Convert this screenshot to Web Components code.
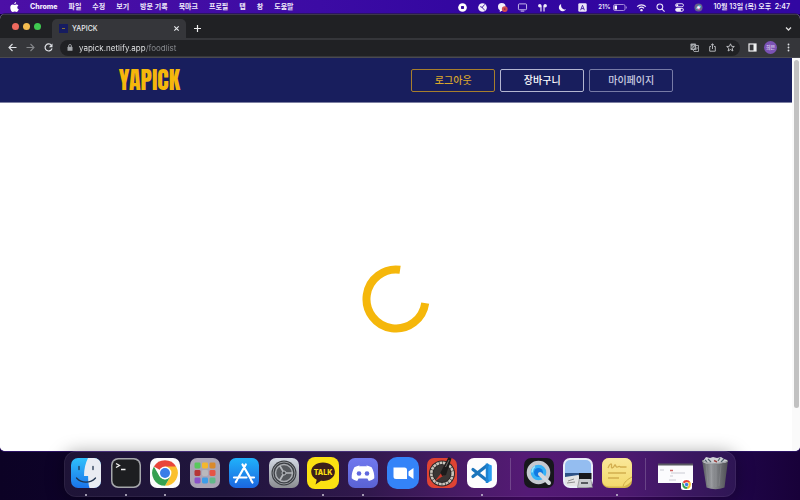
<!DOCTYPE html>
<html lang="ko">
<head>
<meta charset="utf-8">
<title>YAPICK</title>
<style>
  body {
    margin: 0;
    font-family: Inter, "Liberation Sans", "Noto Sans CJK KR", sans-serif;
    font-size: 7px;
    line-height: 10px;
  }
</style>
</head>
<body>
<mac-desktop>
  <menu-bar slot="menu"></menu-bar>
  <browser-window slot="window">
    <browser-tab slot="tab">YAPICK</browser-tab>
    <address-row slot="toolbar"></address-row>
    <yapick-page>
      <outline-button slot="nav" tone="gold">로그아웃</outline-button>
      <outline-button slot="nav" tone="white">장바구니</outline-button>
      <outline-button slot="nav">마이페이지</outline-button>
      <loading-ring></loading-ring>
    </yapick-page>
  </browser-window>
  <app-dock slot="dock">
    <dock-icon slot="apps" name="finder" label="Finder" running></dock-icon>
    <dock-icon slot="apps" name="terminal" label="Terminal" running></dock-icon>
    <dock-icon slot="apps" name="chrome" label="Chrome" running></dock-icon>
    <dock-icon slot="apps" name="launchpad" label="Launchpad"></dock-icon>
    <dock-icon slot="apps" name="appstore" label="App Store"></dock-icon>
    <dock-icon slot="apps" name="settings" label="Settings"></dock-icon>
    <dock-icon slot="apps" name="talk" label="KakaoTalk" running></dock-icon>
    <dock-icon slot="apps" name="discord" label="Discord" running></dock-icon>
    <dock-icon slot="apps" name="zoom" label="Zoom"></dock-icon>
    <dock-icon slot="apps" name="gauge" label="Gauge"></dock-icon>
    <dock-icon slot="apps" name="code" label="Code" running></dock-icon>
    <dock-icon slot="recent" name="quicktime" label="QuickTime"></dock-icon>
    <dock-icon slot="recent" name="preview" label="Preview"></dock-icon>
    <dock-icon slot="recent" name="notes" label="Stickies" running></dock-icon>
    <dock-icon slot="files" name="window" label="Window" wide></dock-icon>
    <dock-icon slot="files" name="trash" label="Trash"></dock-icon>
  </app-dock>
</mac-desktop>

<script>
const define = (tag, html, setup) => {
  const template = document.createElement('template');
  template.innerHTML = html;
  customElements.define(tag, class extends HTMLElement {
    constructor() {
      super();
      this.attachShadow({ mode: 'open' }).append(template.content.cloneNode(true));
    }
    connectedCallback() { if (setup) setup(this, this.shadowRoot); }
  });
};

const chromeMark = `
  <circle cx="15" cy="15" r="13" fill="#fff"/>
  <path d="M15 15 3.9 8.6A12.8 12.8 0 0 1 26.1 8.6z" fill="#e8453a"/>
  <path d="M15 15V8.6H26.1A12.8 12.8 0 0 1 15 27.8L20.5 18.2z" fill="#fbc02d"/>
  <path d="M3.9 8.6 9.5 18.2 15 21.4 20.5 18.2 15 27.8A12.8 12.8 0 0 1 3.9 8.6z" fill="#35a04f"/>
  <circle cx="15" cy="15" r="6.4" fill="#fff"/><circle cx="15" cy="15" r="5" fill="#3b7de8"/>`;

const tile = (fill, extra = '') => `<rect width="30" height="30" rx="7" fill="${fill}" ${extra}/>`;
const grid = ['#58c85c','#f3b72e','#d98a2c','#b53636','#b9b9bd','#e65345','#8a52c8','#3c9de8','#62b889'];

const appIcons = {
  finder: `<defs><linearGradient id="a" x2="0" y2="1"><stop stop-color="#2fc0fb"/><stop offset="1" stop-color="#1a73ea"/></linearGradient></defs>
    ${tile('url(#a)')}
    <path d="M17 0h6a7 7 0 0 1 7 7v16a7 7 0 0 1-7 7h-4.500c-1-3-1.400-8-1.400-12H13C13 11 14.500 5 17 0z" fill="#e9ecf2"/>
    <path d="M8 8.500v3M22 8.500v3M5.500 20c5 5.500 14 5.500 19 0" fill="none" stroke="#20334d" stroke-width="1.300" stroke-linecap="round"/>`,
  terminal: `${tile('#a5a7ab')}<rect x="1.500" y="1.500" width="27" height="27" rx="6" fill="#1d1e21"/>
    <path d="M5 5.500 8.500 7.500 5 9.500M10 11.500h4.500" fill="none" stroke="#f0f0f0" stroke-width="1.300"/>`,
  chrome: `${tile('#fbfbfb')}${chromeMark}`,
  launchpad: `${tile('#aaa5b5')}${grid.map((c, i) =>
    `<rect x="${4.500 + (i % 3) * 7.500}" y="${4.500 + Math.floor(i / 3) * 7.500}" width="6" height="6" rx="1.400" fill="${c}"/>`).join('')}`,
  appstore: `<defs><linearGradient id="a" x2="0" y2="1"><stop stop-color="#20b2fa"/><stop offset="1" stop-color="#1b66e0"/></linearGradient></defs>
    ${tile('url(#a)')}<path d="M13.500 6.500 21.500 20.500M16.800 6.500 8.800 20.500M5 19.500h12.500M21 19.500h4M22 22l1.500 2.500M8 22l-1.200 2" fill="none" stroke="#fff" stroke-width="2.200" stroke-linecap="round"/>`,
  settings: `<defs><linearGradient id="a" x2="0" y2="1"><stop stop-color="#d3d9e4"/><stop offset="1" stop-color="#8b8d91"/></linearGradient></defs>
    ${tile('url(#a)')}<circle cx="15" cy="15" r="12.500" fill="#3b3e43"/>
    <circle cx="15" cy="15" r="11" fill="none" stroke="#92959a" stroke-width="1"/>
    <circle cx="15" cy="15" r="8.500" fill="#55585d" stroke="#a9acb1" stroke-width="1.500"/>
    <path d="M15 15 10.800 7.800M15 15h8.300M15 15l-4.200 7.200" stroke="#b5b8bc" stroke-width="1.700"/><circle cx="15" cy="15" r="2" fill="#43464a" stroke="#b8bbc0"/>`,
  talk: `<rect x="-1" y="-1" width="32" height="32" rx="8" fill="#fbe112"/>
    <path d="M15 4.500c-6.800 0-11.800 4-11.800 9.300 0 3.500 2.200 6.400 5.500 8L7.500 26.500l5.400-3.700c8 .8 14-3 14-9C26.900 8.500 21.800 4.500 15 4.500z" fill="#3b1f1c"/>
    <text x="15" y="17" text-anchor="middle" font-family="Inter, sans-serif" font-size="7" font-weight="800" fill="#fbe112">TALK</text>`,
  discord: `<defs><linearGradient id="a" x2="0" y2="1"><stop stop-color="#7078ee"/><stop offset="1" stop-color="#5a62d4"/></linearGradient></defs>
    ${tile('url(#a)')}<path d="M11.800 7.500 11 8.200h8l-.8-.7c2 .3 4 .9 5.400 1.700 1.900 3 2.900 7 2.700 11-1.600 1.400-3.500 2.300-5.500 2.700l-1.400-2.300h-8.800l-1.400 2.300c-2-.4-3.900-1.300-5.500-2.700-.2-4 .8-8 2.700-11 1.400-.8 3.400-1.400 5.400-1.700z" fill="#fff"/>
    <circle cx="11" cy="15.500" r="2.300" fill="#6068de"/><circle cx="19" cy="15.500" r="2.300" fill="#6068de"/>`,
  zoom: `<rect x="-1" y="-1" width="32" height="32" rx="10" fill="#3483f8"/>
    <path d="M5.500 9.500h11a2.500 2.500 0 0 1 2.500 2.500V21H8a2.500 2.500 0 0 1-2.500-2.500zM20.500 13.500 25.500 10v11l-5-3.500z" fill="#fff"/>`,
  gauge: `${tile('#df4433')}<circle cx="15" cy="15.500" r="13" fill="#2b2828"/>
    <circle cx="15" cy="15.500" r="10.700" fill="none" stroke="#c9c4bb" stroke-width="2.600" stroke-dasharray="2.800 .6"/>
    <circle cx="15" cy="15.500" r="8.500" fill="#3a3635"/><path d="M7.500 23.500 16 13l3 3z" fill="#d0382a"/>
    <path d="M13.500 14.500 21.500-1l3 1.500L19 17l-4 1z" fill="#1c1a1a"/><path d="M18.500 9 22 2" stroke="#77706d"/>`,
  code: `${tile('#fdfdfd')}
    <path d="M20 5.500 24.800 7.500V22.500L20 25z" fill="#2a9df0"/>
    <path d="M6 11.500 20 22.500M6 18.500 20 7.500" stroke="#1b75bc" stroke-width="3.200" stroke-linecap="round"/>
    <path d="M20 5.500v19.500" stroke="#1c83d2" stroke-width="2.500"/>`,
  quicktime: `${tile('#17171c')}<circle cx="14.500" cy="14.500" r="9.800" fill="#35b1f6" stroke="#c5c9d0" stroke-width="4"/>
    <circle cx="14.500" cy="14.500" r="4.500" fill="#1179e2"/><path d="M16 16 25 25" stroke="#d4d7dc" stroke-width="4" stroke-linecap="round"/><path d="M11 8.500a7 7 0 0 0-3 6" fill="none" stroke="#99e7ff" stroke-width="1.500"/>`,
  preview: `${tile('#e9eef8')}<rect x="2" y="2" width="26" height="26" rx="5" fill="#94bdf0"/>
    <path d="M2 15h26v7H2z" fill="#2d5286"/><path d="M2 19 15 17l13 5v2a4 4 0 0 1-4 4H6a4 4 0 0 1-4-4z" fill="#e4e5e5"/>
    <path d="M5 23l6-2M4 25l8-1" stroke="#8e8e8d"/><path d="M16.500 20h11l2 9.500h-15z" fill="#c8cbce" stroke="#77797b" stroke-width=".6"/>
    <path d="M16 15h12.500v6H16z" fill="#18191c"/><path d="M18 25h7" stroke="#56595d" stroke-width="2"/>`,
  notes: `<defs><linearGradient id="a" x2="0" y2="1"><stop stop-color="#fae89a"/><stop offset="1" stop-color="#f3d96d"/></linearGradient></defs>
    ${tile('#d4b54c')}<path d="M7 0h16a7 7 0 0 1 7 7v14c0 3-7 7.500-9 7.500H7A7 7 0 0 1 0 22V7a7 7 0 0 1 7-7z" fill="url(#a)"/>
    <path d="M6 10c2-5 4-5 3.500-2s2 2 3-.5 1 2.500 3 1.500 2-1 3 0h6M6 15h18M6 20h11" fill="none" stroke="#d2ae4f" stroke-width="1.300"/><path d="M30 19c-4 2-8 5-9 9.500" fill="none" stroke="#cfae49"/>`,
  window: `<rect x="-1" y="6" width="35" height="19" fill="#fbfbfd"/><path d="M-1 6.500h35" stroke="#5a5b62" stroke-width="2"/>
    <path d="M11 12.500h3" stroke="#cf6565" stroke-width="1.500"/><path d="M12 15h14M11 18h3M1 12h4M10 22h7" stroke="#bfc0c8" stroke-width=".8"/>
    <rect x="22" y="21" width="11" height="11" rx="2.500" fill="#fff"/><g transform="translate(22.300 21.300) scale(.35)">${chromeMark}</g>`,
  trash: `<defs><linearGradient id="a"><stop stop-color="#55575c"/><stop offset=".35" stop-color="#96989c"/><stop offset=".7" stop-color="#6d6f73"/><stop offset="1" stop-color="#4d4e53"/></linearGradient></defs>
    <path d="M2 2h26L24.500 29.500q-9 3.500-18 0z" fill="url(#a)"/>
    <path d="M6 6l2 21M11 7l1 22M16 7v22M21 7l-2 21" stroke="#c3c5c8" stroke-width=".6" opacity=".3"/>
    <path d="M3 3 6-1l4 1 3-1 4 1 4-1 3 2 3 1v2c-5 2-22 3-24 0z" fill="#cfd2d6"/>
    <path d="M8 1l3 3M20 0l-2 3M5 2l2 2M24 1l-3 3" stroke="#51616b" stroke-width="1.200"/><path d="M14 2.500l3 1.500" stroke="#9c4542" stroke-width="1.500"/><path d="M2 3q13 5 26 0" fill="none" stroke="#999ca1"/>`
};

const statusIcons = {
  record: `<circle cx="5" cy="5" r="4.800" fill="#fff"/><rect x="3.300" y="3.300" width="3.400" height="3.400" rx=".8" fill="#3206a0"/>`,
  clock: `<circle cx="5" cy="5" r="4.800" fill="#f2eefb"/><path d="M7.500 1.500 4.500 5l3 3M5 5 2.500 4" fill="none" stroke="#3206a0"/>`,
  chat: `<circle cx="4.200" cy="4.300" r="4.200" fill="#f4f0fb"/><path d="M2 7v3l3-2z" fill="#fff"/><circle cx="7.500" cy="6.800" r="3.200" fill="#d14a51"/><circle cx="7.500" cy="6.800" r="1" fill="#8d2547"/>`,
  display: `<rect x=".5" y="1" width="9" height="6.500" rx="1" fill="none" stroke="#e6dffa" stroke-width=".9"/><path d="M3 9h4" stroke="#e6dffa"/>`,
  pods: `<path d="M3.300 9.500V3M6.700 9.500V3" fill="none" stroke="#f0ecfa" stroke-width="1.300"/><circle cx="2" cy="3" r="1.900" fill="#f0ecfa"/><circle cx="8" cy="3" r="1.900" fill="#f0ecfa"/>`,
  moon: `<path d="M3.500 1a4.300 4.300 0 1 0 5.500 6C5.500 7.800 2.800 4.800 3.500 1z" fill="#f4f0fb"/>`,
  input: `<rect x=".3" y=".3" width="9.400" height="9.400" rx="1.500" fill="#ece7fa"/><path d="M2.900 8 5 2.500 7.100 8M3.600 6.200h2.800" fill="none" stroke="#3d1ba5"/>`,
  wifi: `<path d="M.2 4a6.800 6.800 0 0 1 9.600 0M2.200 6a4 4 0 0 1 5.600 0" fill="none" stroke="#f0ecfa" stroke-width="1.400"/><circle cx="5" cy="8" r="1.300" fill="#f0ecfa"/>`,
  search: `<circle cx="4.300" cy="4.300" r="3.200" fill="none" stroke="#e9e3fb" stroke-width="1.200"/><path d="M6.500 6.500 9.500 9.500" stroke="#e9e3fb" stroke-width="1.200"/>`,
  control: `<rect x=".6" y=".8" width="8.800" height="3.400" rx="1.700" fill="none" stroke="#f0ecfa"/><circle cx="2.500" cy="2.500" r="1.200" fill="#fff"/><rect x=".2" y="5.600" width="9.600" height="4" rx="2" fill="#f0ecfa"/><circle cx="7.500" cy="7.600" r="1.200" fill="#3206a0"/>`,
  siri: `<circle cx="5" cy="5" r="4.500" fill="#66618b"/><path d="M2 6q3-6 6-2-2 5-6 2z" fill="#50c8dc"/><path d="M3 3.500q3 0 4 4-4 0-4-4z" fill="#e3559b"/><circle cx="5" cy="5" r="1.500" fill="#f6f5ff"/>`
};
const status = name => `<button aria-label="${name}"><svg viewBox="0 0 10 10">${statusIcons[name]}</svg></button>`;

const reset = `button { font: inherit; color: inherit; background: none; border: 0; padding: 0; margin: 0; white-space: nowrap; } svg { display: block; overflow: visible; }`;

define('mac-desktop', `
  <style>
    :host {
      display: flex; flex-direction: column; height: 100vh; overflow: hidden;
      background: linear-gradient(90deg, #0c0225 0%, #10042f 28%, #220740 46%, #3c0a5c 58%, #48096c 66%, #400866 78%, #1f0548 92%, #180139 100%);
    }
  </style>
  <slot name="menu"></slot>
  <slot name="window"></slot>
  <slot name="dock"></slot>`);

define('menu-bar', `
  <style>
    ${reset}
    :host {
      display: flex; justify-content: space-between; align-items: center; height: 14px; padding: 0 10px;
      background: linear-gradient(90deg, #4c0fa6, #3c0ba4 40%, #3206a0 60%, #3207a2); color: #f1ecfc; font-weight: 600;
    }
    nav, .status, .group { display: flex; align-items: center; }
    nav { gap: 11px; }
    .status { gap: 10px; }
    .group { gap: 11px; }
    .battery { display: flex; align-items: center; gap: 3px; font-size: 6px; }
    .status svg { width: 9px; height: 9px; }
    .battery svg { width: 14px; height: 7px; }
    .apple svg { width: 9px; height: 10px; }
    .app { font-weight: 800; }
  </style>
  <nav>
    <button class="apple" aria-label="Apple"><svg viewBox="0 0 9 10"><path d="M6.100 0C6.200 1.300 5.200 2.300 4.200 2.300 4.100 1.200 5.100.2 6.100 0zM4.500 2.900C5.200 2.900 5.700 2.400 6.600 2.400c.7 0 1.400.4 1.800 1C6.700 4.400 7 6.700 8.800 7.300 8.200 8.900 7.300 10 6.500 10c-.7 0-1-.4-1.800-.4S3.500 10 2.900 10C1.600 10 .3 7.700.3 5.700.3 3.700 1.500 2.500 2.800 2.500c.7 0 1.200.4 1.700.4z" fill="#fff"/></svg></button>
    <button class="app">Chrome</button><button>파일</button><button>수정</button><button>보기</button><button>방문 기록</button><button>북마크</button><button>프로필</button><button>탭</button><button>창</button><button>도움말</button>
  </nav>
  <div class="status">
    <div class="group">${['record','clock','chat','display','pods','moon','input'].map(status).join('')}
      <span class="battery">21%<svg viewBox="0 0 14 7"><rect x=".5" y=".5" width="11.500" height="6" rx="1.500" fill="none" stroke="#a58bda"/><rect x="1.500" y="1.500" width="2.500" height="4" fill="#fff"/><path d="M13.300 2.500v2" stroke="#a58bda"/></svg></span></div>
    ${['wifi','search','control','siri'].map(status).join('')}
    <button>10월 13일 (목) 오후&nbsp; 2:47</button>
  </div>`);

define('browser-window', `
  <style>
    ${reset}
    :host { flex: 1; min-height: 0; display: flex; flex-direction: column; background: #fff; border-radius: 5px; overflow: hidden; box-shadow: 0 0 0 1px #2b1263; }
    .strip { display: flex; align-items: flex-end; height: 24px; background: #202124; padding: 0 8px 0 12px; border-top: 1px solid #3c3849; box-sizing: border-box; }
    .lights { display: flex; gap: 4px; align-self: center; margin-right: 11px; }
    .lights button { width: 7px; height: 7px; border-radius: 50%; background: var(--c); }
    .new { align-self: center; padding-left: 8px; padding-top: 4px; }
    .more { margin-left: auto; align-self: center; padding-top: 4px; }
    .view { flex: 1; min-height: 0; display: flex; }
    ::slotted(yapick-page) { flex: 1; }
    .scroll { width: 8px; box-sizing: border-box; padding: 2px 1px 0 2px; background: #fafafa; }
    .thumb { height: 89%; border-radius: 3px; background: #c1c1c1; }
  </style>
  <div class="strip">
    <div class="lights"><button style="--c:#ee6a5f" aria-label="close"></button><button style="--c:#f5bd4f" aria-label="minimise"></button><button style="--c:#3fc950" aria-label="zoom"></button></div>
    <slot name="tab"></slot>
    <button class="new" aria-label="new tab"><svg width="7" height="7" viewBox="0 0 7 7"><path d="M3.500 0v7M0 3.500h7" stroke="#eee" stroke-width="1.200"/></svg></button>
    <button class="more" aria-label="tabs"><svg width="7" height="4" viewBox="0 0 7 4"><path d="M1 .5 3.500 3 6 .5" fill="none" stroke="#ddd" stroke-width="1.300"/></svg></button>
  </div>
  <slot name="toolbar"></slot>
  <div class="view"><slot></slot><div class="scroll"><div class="thumb"></div></div></div>`);

define('browser-tab', `
  <style>
    ${reset}
    :host { display: flex; align-items: center; gap: 4px; width: 134px; height: 19px; box-sizing: border-box; padding: 0 7px; border-radius: 5px 5px 0 0; background: #35363a; color: #e8eaed; font-weight: 500; }
    .fav { width: 9px; height: 9px; background: #161c60; display: grid; place-items: center; }
    .fav::after { content: ""; width: 3px; height: 1px; background: #8a7434; }
    .close { margin-left: auto; }
  </style>
  <span class="fav"></span><span><slot></slot></span>
  <button class="close" aria-label="close tab"><svg width="5" height="5" viewBox="0 0 5 5"><path d="M.3.3 4.700 4.700M4.700.3.3 4.700" stroke="#e8eaed" stroke-width="1.100"/></svg></button>`);

define('address-row', `
  <style>
    ${reset}
    :host { display: flex; align-items: center; height: 20px; box-sizing: border-box; border-bottom: 1px solid #4a4a50; background: #35363a; padding: 0 7px 0 8px; }
    .nav { display: flex; gap: 9px; margin-right: 7px; }
    .bar { flex: 1; display: flex; align-items: center; gap: 6px; height: 16px; border-radius: 8px; background: #202124; padding: 0 5px 0 7px; margin-right: 8px; }
    input { flex: 1; min-width: 0; border: 0; padding: 0; outline: 0; font: inherit; font-size: 8px; line-height: 12px; color: #e8eaed;
      background: linear-gradient(90deg, #f1f3f4 var(--host-width), #8d9095 var(--host-width)); -webkit-background-clip: text; background-clip: text; -webkit-text-fill-color: transparent; }
    .tools { display: flex; gap: 9px; }
    .side { display: flex; align-items: center; gap: 7px; }
    .me { width: 13px; height: 13px; border-radius: 50%; background: #7b52b5; color: #fff; font-size: 5px; line-height: 13px; text-align: center; }
  </style>
  <div class="nav">
    <button aria-label="back"><svg width="9" height="9" viewBox="0 0 9 9"><path d="M8.500 4.500H1M4.500 1 1 4.500 4.500 8" fill="none" stroke="#dfe1e5" stroke-width="1.100"/></svg></button>
    <button aria-label="forward"><svg width="9" height="9" viewBox="0 0 9 9"><path d="M.5 4.500H8M4.500 1 8 4.500 4.500 8" fill="none" stroke="#85878b" stroke-width="1.100"/></svg></button>
    <button aria-label="reload"><svg width="9" height="9" viewBox="0 0 9 9"><path d="M7.500 2.500A3.500 3.500 0 1 0 8 5.300" fill="none" stroke="#dfe1e5" stroke-width="1.200"/><path d="M8.500.5v3.700H4.800z" fill="#dfe1e5"/></svg></button>
  </div>
  <div class="bar">
    <svg width="6" height="7" viewBox="0 0 6 7"><rect x=".5" y="2.800" width="5" height="4" rx=".6" fill="#a4a7ab"/><path d="M1.600 3V1.900a1.400 1.400 0 0 1 2.800 0V3" fill="none" stroke="#a4a7ab" stroke-width=".9"/></svg>
    <input type="text" aria-label="address" value="yapick.netlify.app/foodlist">
    <div class="tools">
      <button aria-label="translate"><svg width="9" height="9" viewBox="0 0 9 9"><rect x=".5" y=".5" width="5.500" height="6.500" rx=".8" fill="#aaadb1"/><path d="M4.500 2.500h4v6H4l-.8-1.500" fill="none" stroke="#aaadb1" stroke-width=".9"/><path d="M4.500 3.300a1.400 1.400 0 1 0 .2 1H3.400" fill="none" stroke="#25262a" stroke-width=".7"/><path d="M6 5h2M7 4.500c0 1.500-.5 2-1.300 2.700" fill="none" stroke="#aaadb1" stroke-width=".6"/></svg></button>
      <button aria-label="share"><svg width="9" height="9" viewBox="0 0 9 9"><path d="M3 3.500H1.700v4.700h5.600V3.500H6M4.500 6V1M2.900 2.300 4.500.8l1.600 1.500" fill="none" stroke="#bfc1c5" stroke-width=".9"/></svg></button>
      <button aria-label="bookmark"><svg width="9" height="9" viewBox="0 0 9 9"><path d="m4.500.8 1.100 2.500 2.700.2-2.100 1.800.7 2.700-2.400-1.500L2.100 8l.7-2.700L.7 3.500l2.700-.2z" fill="none" stroke="#c8cacd" stroke-width=".9"/></svg></button>
    </div>
  </div>
  <div class="side">
    <button aria-label="side panel"><svg width="9" height="9" viewBox="0 0 9 9"><rect x="1" y="1" width="7" height="7" fill="none" stroke="#f0f1f2" stroke-width="1.200"/><path d="M5.500 1H8v7H5.500z" fill="#f0f1f2"/></svg></button>
    <button class="me" aria-label="profile">희은</button>
    <button aria-label="menu"><svg width="9" height="9" viewBox="0 0 9 9" fill="#dfe1e5"><circle cx="4.500" cy="1.500" r=".9"/><circle cx="4.500" cy="4.500" r=".9"/><circle cx="4.500" cy="7.500" r=".9"/></svg></button>
  </div>`, (host, root) => {
    const input = root.querySelector('input');
    const pen = document.createElement('canvas').getContext('2d');
    pen.font = getComputedStyle(input).font;
    input.style.setProperty('--host-width', Math.round(pen.measureText('yapick.netlify.app').width) + 'px');
  });

define('yapick-page', `
  <style>
    :host { display: flex; flex-direction: column; background: #fff; }
    header { display: flex; justify-content: space-between; align-items: center; height: 45px; padding: 0 15%; background: #181e5d; border-bottom: 1px solid #7d80a2; box-sizing: border-box; }
    a { color: #f5b70b; font-family: Anton, Impact, "Liberation Sans Narrow", "Liberation Sans", sans-serif; font-weight: 400; font-size: 24px; line-height: 24px; text-decoration: none; }
    nav { display: flex; gap: 5px; }
    main { flex: 1; display: grid; place-items: center; padding-top: 44px; }
  </style>
  <header><a href="#">YAPICK</a><nav><slot name="nav"></slot></nav></header>
  <main><slot></slot></main>`);

define('outline-button', `
  <style>
    :host { display: block; --line: #777ba6; --ink: #c9cbe0; }
    :host([tone="gold"]) { --line: #a77e2c; --ink: #d9a52c; }
    :host([tone="white"]) { --line: #b3b6d0; --ink: #fff; }
    button { width: 84px; height: 23px; border: 1px solid var(--line); border-radius: 2px; padding: 0; background: none; color: var(--ink); font: 500 10px/14px "Noto Sans CJK KR", sans-serif; }
  </style>
  <button><slot></slot></button>`);

define('loading-ring', `
  <style>:host { display: block; } svg { display: block; }</style>
  <svg width="68" height="68" viewBox="0 0 68 68" role="img" aria-label="loading">
    <circle cx="34" cy="34" r="29.500" fill="none" stroke="#f5b70b" stroke-width="8" pathLength="360" stroke-dasharray="270 90" transform="rotate(8 34 34)"/>
  </svg>`);

define('app-dock', `
  <style>
    :host { position: relative; z-index: 1; display: flex; align-items: center; gap: 13px; width: 84%; height: 46px; margin: 0 auto 3px; padding: 0 6px 0 7px; box-sizing: border-box; border-radius: 12px; background: #ffffff12; box-shadow: 0 0 0 1px #ffffff10 inset, 0 2px 18px #00000060; }
    .group { display: flex; justify-content: space-between; }
    .apps { flex: 425 1 0; } .recent { flex: 108 1 0; } .files { flex: 71 1 0; }
    .rule { width: 1px; height: 32px; background: #ffffff30; }
  </style>
  <div class="group apps"><slot name="apps"></slot></div>
  <div class="rule"></div>
  <div class="group recent"><slot name="recent"></slot></div>
  <div class="rule"></div>
  <div class="group files"><slot name="files"></slot></div>`);

define('dock-icon', `
  <style>
    ${reset}
    :host { display: flex; flex-direction: column; align-items: center; gap: 6px; padding: 7px 0 1px; width: 30px; }
    :host([wide]) { width: 34px; }
    svg { width: 100%; height: 30px; }
    button { display: block; width: 100%; }
    .dot { width: 2px; height: 2px; border-radius: 50%; }
    :host([running]) .dot { background: #c9c3d4; }
  </style>
  <button><svg></svg></button><span class="dot"></span>`, (host, root) => {
    const svg = root.querySelector('svg');
    svg.setAttribute('viewBox', host.hasAttribute('wide') ? '0 0 34 30' : '0 0 30 30');
    svg.innerHTML = appIcons[host.getAttribute('name')];
    root.querySelector('button').setAttribute('aria-label', host.getAttribute('label'));
  });
</script>
</body>
</html>
